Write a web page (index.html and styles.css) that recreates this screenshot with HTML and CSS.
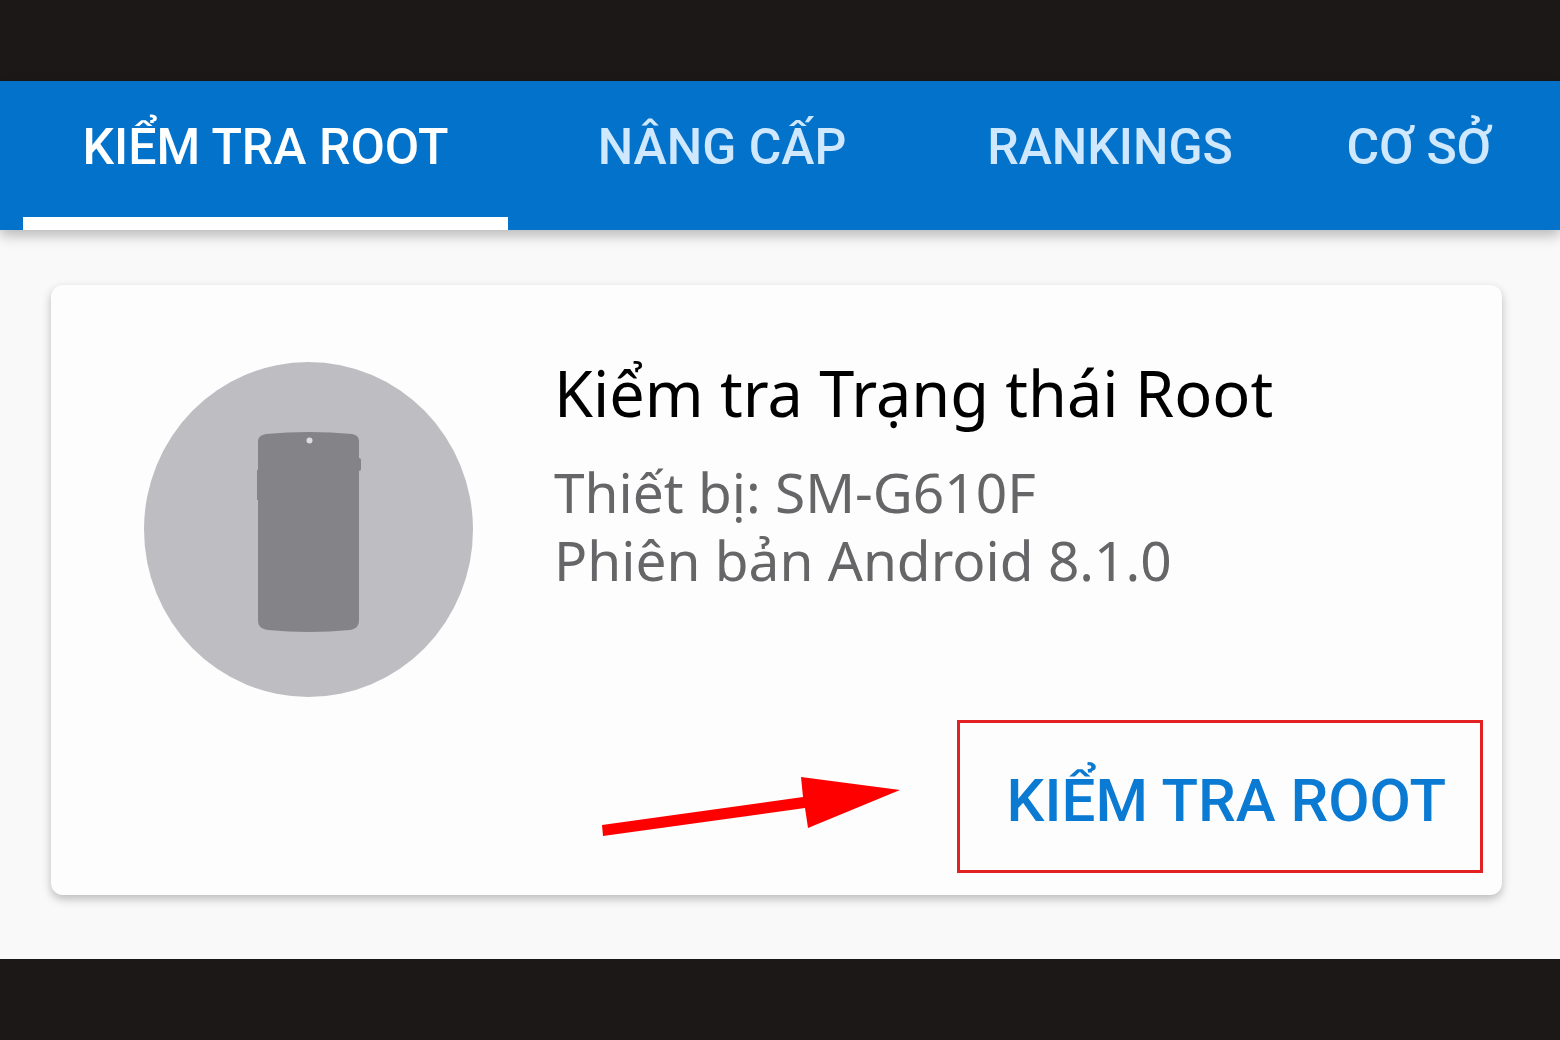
FILE: index.html
```html
<!DOCTYPE html>
<html lang="vi">
<head>
  <meta charset="UTF-8" />
  <meta name="viewport" content="width=device-width, initial-scale=1.0"/>
  <title>Kiểm tra Root</title>
  <link rel="stylesheet" href="styles.css">
</head>
<body>
  <div class="screen">
    <nav class="tabs">
      <a class="tab active" href="#check">KIỂM TRA ROOT</a>
      <a class="tab" href="#upgrade">NÂNG CẤP</a>
      <a class="tab" href="#rankings">RANKINGS</a>
      <a class="tab" href="#basics">CƠ SỞ</a>
    </nav>

    <main class="content">
      <section class="card" id="check">
        <div class="device">
          <svg class="device-icon" viewBox="0 0 330 336" aria-hidden="true">
            <ellipse cx="164.500" cy="167.500" rx="164.500" ry="167.500" fill="#bebdc2"/>
            <path fill="#848388" d="M114 80C114 75 117 73 122 72Q165 68 208 72C213 73 215 75 215 80V96Q217 96 217 98V107Q217 109 215 109V258C215 264 212 267 206 268Q165 272 124 268C117 267 114 264 114 258V138H113V108H114Z"/>
            <circle cx="165.500" cy="78.500" r="3" fill="#dddce0"/>
          </svg>
          <div class="device-info">
            <h1>Kiểm tra Trạng thái Root</h1>
            <p>Thiết bị: SM-G610F</p>
            <p>Phiên bản Android 8.1.0</p>
          </div>
        </div>

        <div class="actions">
          <svg class="arrow" viewBox="0 0 298 153" aria-hidden="true">
            <path fill="#fe0000" d="M0 105L201 77L199 57L298 70L206 108L203 88L1 116Z"/>
          </svg>
          <button class="check-btn" type="button">KIỂM TRA ROOT</button>
        </div>
      </section>
    </main>
  </div>
</body>
</html>
```

FILE: styles.css
```css
:root {
  --primary: #0372cb;
  --tab-text: #cfe8fd;
  --page-bg: #f9f9f9;
  --card-bg: #fdfdfd;
  --frame: #1b1817;
}

* {
  box-sizing: border-box;
}

body {
  margin: 0;
  min-height: 100vh;
  padding: 81px 0;
  display: flex;
  flex-direction: column;
  background-color: var(--frame);
  font-family: Roboto, sans-serif;
}

.screen {
  flex: 1;
  background-color: var(--page-bg);
}

.tabs {
  display: grid;
  grid-template-columns: 485fr 428fr 348fr 270fr;
  padding: 0 6px 0 23px;
  background-color: var(--primary);
  box-shadow: 0 6px 12px rgba(0, 0, 0, 0.25);
}

.tab {
  padding: 36px 0 40px;
  border-bottom: 13px solid transparent;
  color: var(--tab-text);
  font-size: 50px;
  font-weight: 500;
  line-height: 60px;
  text-align: center;
  text-decoration: none;
  white-space: nowrap;
}

.tab.active {
  color: white;
  border-bottom-color: white;
}

.content {
  padding: 55px 58px 63px 51px;
}

.card {
  padding: 77px 19px 22px 93px;
  background-color: var(--card-bg);
  border-radius: 12px;
  box-shadow: 0 4px 10px rgba(0, 0, 0, 0.25);
}

.device {
  display: flex;
  gap: 80px;
}

.device-icon {
  flex: none;
  width: 330px;
  height: 336px;
}

.device-info {
  font-family: "Noto Sans", sans-serif;
}

.device-info h1 {
  margin: 0 0 34px;
  color: black;
  font-size: 63px;
  font-weight: 400;
  line-height: 62px;
}

.device-info p {
  margin: 0;
  color: #666668;
  font-size: 55px;
  line-height: 68px;
}

.actions {
  display: flex;
  justify-content: flex-end;
  gap: 57px;
  margin-top: 22px;
}

.arrow {
  width: 298px;
  height: 153px;
}

.check-btn {
  padding: 40px 34px 31px 47px;
  background: none;
  border: 3px solid #e22222;
  color: #0b7ad3;
  font-family: inherit;
  font-size: 60px;
  font-weight: 500;
  line-height: 76px;
  white-space: nowrap;
  cursor: pointer;
}
```
